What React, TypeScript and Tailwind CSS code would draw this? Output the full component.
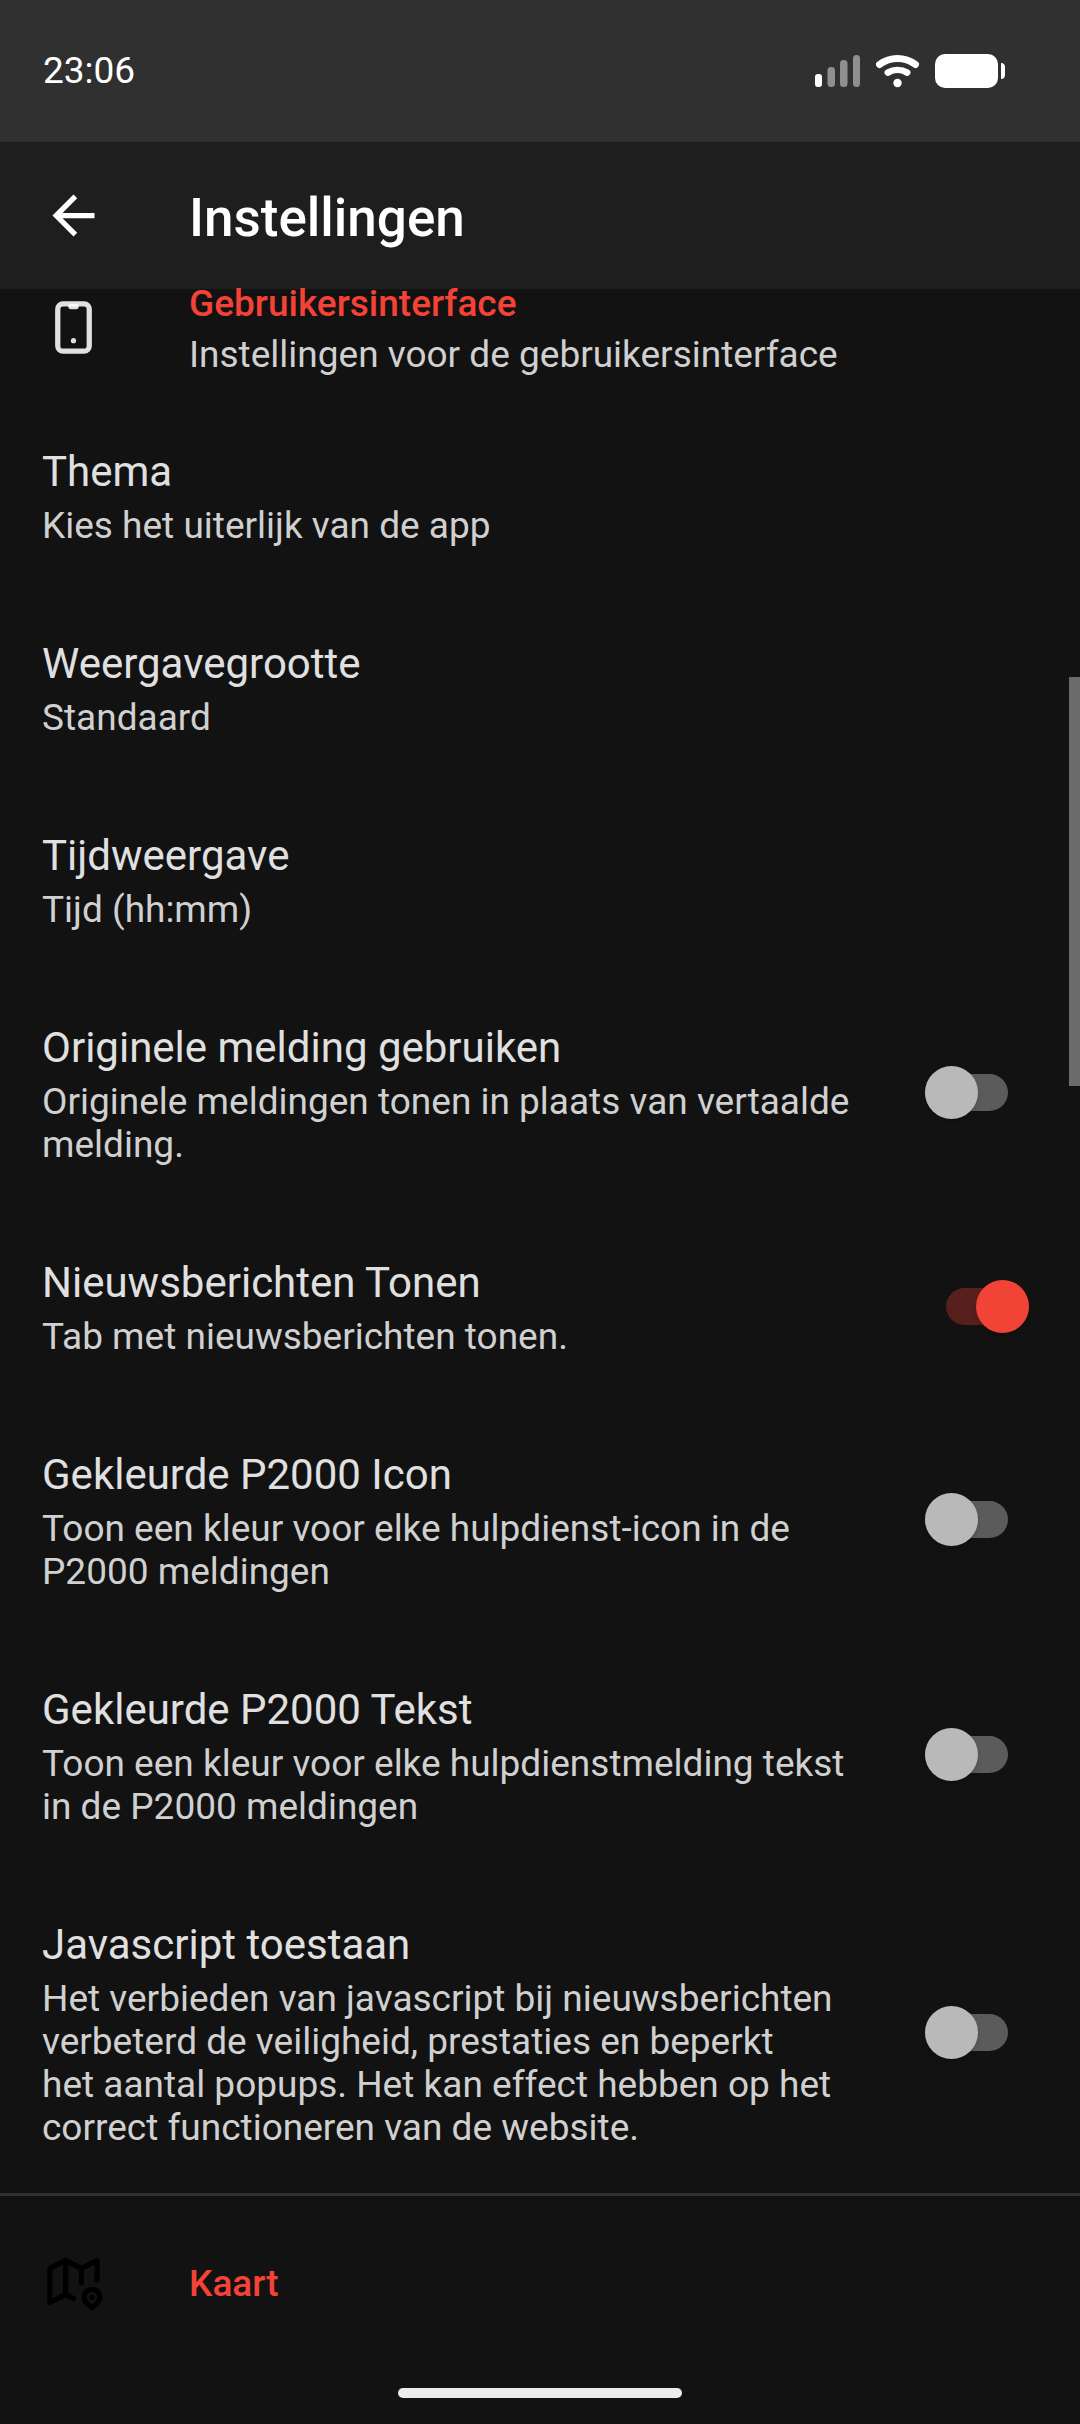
import React, { useState } from "react";

interface Setting {
  id: string;
  title: string;
  description: string;
  toggle?: boolean;
}

interface SwitchProps {
  id: string;
  checked: boolean;
  onChange: () => void;
}

interface SectionHeaderProps {
  icon: React.ReactNode;
  title: string;
  description?: string;
  className?: string;
}

const settings: Setting[] = [
  { id: "theme", title: "Thema", description: "Kies het uiterlijk van de app" },
  { id: "size", title: "Weergavegrootte", description: "Standaard" },
  { id: "time", title: "Tijdweergave", description: "Tijd (hh:mm)" },
  {
    id: "original",
    title: "Originele melding gebruiken",
    description: "Originele meldingen tonen in plaats van vertaalde melding.",
    toggle: true,
  },
  {
    id: "news",
    title: "Nieuwsberichten Tonen",
    description: "Tab met nieuwsberichten tonen.",
    toggle: true,
  },
  {
    id: "coloredIcon",
    title: "Gekleurde P2000 Icon",
    description: "Toon een kleur voor elke hulpdienst-icon in de P2000 meldingen",
    toggle: true,
  },
  {
    id: "coloredText",
    title: "Gekleurde P2000 Tekst",
    description: "Toon een kleur voor elke hulpdienstmelding tekst in de P2000 meldingen",
    toggle: true,
  },
  {
    id: "javascript",
    title: "Javascript toestaan",
    description:
      "Het verbieden van javascript bij nieuwsberichten verbeterd de veiligheid, prestaties en beperkt\nhet aantal popups. Het kan effect hebben op het correct functioneren van de website.",
    toggle: true,
  },
];

const SignalIcon = () => (
  <svg width="45" height="34" viewBox="0 0 45 34" fill="#fff">
    <rect x="0" y="20" width="7" height="13" rx="3" />
    <g fill="#8f8f8f">
      <rect x="12.5" y="13" width="7.5" height="20" rx="3.5" />
      <rect x="25" y="6" width="7.5" height="27" rx="3.5" />
      <rect x="38" y="1" width="7" height="32" rx="3.5" />
    </g>
  </svg>
);

const WifiIcon = () => (
  <svg width="43" height="34" viewBox="0 0 43 34" fill="none" stroke="#fff" strokeLinecap="round">
    <path d="M3.5 10.5a30 30 0 0 1 36 0" strokeWidth="7" />
    <path d="M11.8 18.6a19 19 0 0 1 19.4 0" strokeWidth="6.5" />
    <circle cx="21.5" cy="29" r="4.2" fill="#fff" stroke="none" />
  </svg>
);

const BatteryIcon = () => (
  <svg width="70" height="34" viewBox="0 0 70 34" fill="#fff">
    <rect x="0" y="0" width="63" height="34" rx="10" />
    <path d="M66 9c3 0 4 2 4 4v8c0 2-1 4-4 4z" />
  </svg>
);

const BackIcon = () => (
  <svg width="63" height="63" viewBox="0 0 24 24" fill="#fff">
    <path d="M20 11H7.83l5.59-5.59L12 4l-8 8 8 8 1.41-1.41L7.83 13H20v-2z" />
  </svg>
);

const PhoneIcon = () => (
  <svg
    width="63"
    height="63"
    viewBox="0 0 24 24"
    fill="none"
    stroke="rgba(255,255,255,0.87)"
    strokeWidth="2"
    strokeLinecap="round"
    strokeLinejoin="round"
  >
    <path d="M6 5a2 2 0 0 1 2-2h8a2 2 0 0 1 2 2v14a2 2 0 0 1-2 2H8a2 2 0 0 1-2-2z" />
    <path d="M11 4h2" />
    <path d="M12 17v.01" />
  </svg>
);

const MapIcon = () => (
  <svg
    width="63"
    height="63"
    viewBox="0 0 24 24"
    fill="none"
    stroke="#000"
    strokeWidth="2"
    strokeLinecap="round"
    strokeLinejoin="round"
  >
    <path d="M12 18.5 9 17l-6 3V7l6-3 6 3 6-3v7.5" />
    <path d="M9 4v13" />
    <path d="M15 7v5.5" />
    <path d="M21.121 20.121a3 3 0 1 0-4.242 0c.418.419 1.125 1.045 2.121 1.879 1.051-.89 1.759-1.516 2.121-1.879z" />
    <path d="M19 18v.01" />
  </svg>
);

const Switch: React.FC<SwitchProps> = ({ id, checked, onChange }) => (
  <span
    className={`relative flex h-[53px] w-[83px] shrink-0 items-center ${
      checked ? "mr-[51px]" : "mr-[72px]"
    }`}
  >
    <input
      id={id}
      type="checkbox"
      role="switch"
      checked={checked}
      onChange={onChange}
      className="peer absolute inset-0 z-10 m-0 h-full w-full cursor-pointer opacity-0"
    />
    <span className="h-[37px] w-full rounded-full bg-[#5b5b5b] peer-checked:bg-[#57201c]" />
    <span className="absolute left-0 size-[53px] rounded-full bg-[#b9b9b9] shadow-md peer-checked:left-[30px] peer-checked:bg-[#f14336]" />
  </span>
);

const SectionHeader: React.FC<SectionHeaderProps> = ({ icon, title, description, className }) => (
  <div className={`flex items-center gap-[84px] px-[42px] pb-[23px] ${className ?? ""}`}>
    {icon}
    <div className="flex flex-1 flex-col gap-2 pt-1 text-[37px] leading-[43px]">
      <h2 className="font-medium text-[#f44336]">{title}</h2>
      {description && <p className="text-[#d0d0d0]">{description}</p>}
    </div>
  </div>
);

const App: React.FC = () => {
  const [enabled, setEnabled] = useState<Record<string, boolean>>({ news: true });

  const handleToggle = (id: string) => {
    setEnabled((prevState) => ({ ...prevState, [id]: !prevState[id] }));
  };

  return (
    <div className="relative flex min-h-screen flex-col bg-[#121212] font-['Roboto',sans-serif] text-[#e0e0e0]">
      {/* Status bar */}
      <div className="flex h-[142px] items-center justify-between bg-[#303030] pr-[75px] pl-[43px] text-white">
        <span className="pb-0.5 text-[37px] leading-[43px]">23:06</span>
        <div className="flex items-center gap-4">
          <SignalIcon />
          <WifiIcon />
          <BatteryIcon />
        </div>
      </div>

      {/* App bar */}
      <header className="flex h-[147px] items-center gap-[84px] bg-[#1e1e1e] px-[42px] text-white">
        <button type="button" aria-label="Terug" className="cursor-pointer">
          <BackIcon />
        </button>
        <h1 className="pt-1 text-[53px] leading-[62px] font-medium">Instellingen</h1>
      </header>

      {/* Settings list, tucked right up against the app bar */}
      <main className="-mt-[11px] flex-1">
        <SectionHeader
          icon={<PhoneIcon />}
          title="Gebruikersinterface"
          description="Instellingen voor de gebruikersinterface"
        />
        {settings.map((setting) => (
          <div key={setting.id} className="flex items-center gap-[50px] pl-[42px]">
            <label
              htmlFor={setting.toggle ? setting.id : undefined}
              className="flex flex-1 flex-col gap-2 pt-12 pb-11"
            >
              <span className="text-[42px] leading-[49px]">{setting.title}</span>
              <span className="text-[37px] leading-[43px] whitespace-pre-line text-[#d0d0d0]">
                {setting.description}
              </span>
            </label>
            {setting.toggle && (
              <Switch
                id={setting.id}
                checked={!!enabled[setting.id]}
                onChange={() => handleToggle(setting.id)}
              />
            )}
          </div>
        ))}
        <hr className="h-[3px] border-0 bg-[#303030]" />
        <SectionHeader icon={<MapIcon />} title="Kaart" className="pt-[54px]" />
      </main>

      {/* Home indicator */}
      <footer className="flex justify-center pb-[26px]">
        <div className="h-[10px] w-[284px] rounded-full bg-[#ebebeb]" />
      </footer>

      {/* Scroll thumb */}
      <div className="absolute top-[677px] right-0 h-[409px] w-[11px] bg-[#6b6b6b]" />
    </div>
  );
};

export default App;
